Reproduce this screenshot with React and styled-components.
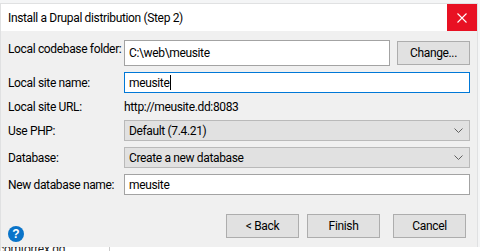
import styled, { createGlobalStyle } from "styled-components";

const GlobalStyle = createGlobalStyle`
  html, body {
    margin: 0;
    padding: 0;
    background: #f4f5f6;
  }
  body {
    font-family: Roboto, "Noto Sans", sans-serif;
    font-size: 12px;
    letter-spacing: -0.35px;
    color: #000;
  }
`;

const Desktop = styled.div`
  width: 480px;
  height: 251px;
  overflow: hidden;
  display: flex;
  flex-direction: column;
  padding-top: 4px;
  box-sizing: border-box;
`;

const Window = styled.div`
  flex-shrink: 0;
  margin-left: 1px;
  width: 476px;
  display: flex;
  flex-direction: column;
  background: #f0f0f0;
  box-shadow: 0 0 0 1px rgba(0, 0, 0, 0.08);
`;

const TitleBar = styled.div`
  height: 27px;
  background: #fff;
  display: flex;
  align-items: center;
  justify-content: space-between;
  padding-left: 7px;
`;

const Title = styled.span`
  font-size: 12px;
  padding-top: 1px;
`;

const CloseButton = styled.button`
  width: 30px;
  height: 27px;
  border: none;
  padding: 0;
  background: #e81123;
  display: flex;
  align-items: center;
  justify-content: center;
`;

const Body = styled.div`
  padding: 9px 7px 3px 7px;
  display: flex;
  flex-direction: column;
`;

const Form = styled.div`
  display: grid;
  grid-template-columns: 116px 1fr;
  row-gap: 6px;
`;

const Label = styled.label`
  align-self: ${(p) => (p.$top ? "start" : "center")};
  padding-top: ${(p) => (p.$top ? "2px" : "0")};
  white-space: nowrap;
`;

const FieldRow = styled.div`
  display: flex;
  align-items: center;
  gap: 7px;
`;

const TextInput = styled.div`
  flex: 1;
  height: ${(p) => p.$h || 21}px;
  box-sizing: border-box;
  background: #fff;
  border: 1px solid ${(p) => (p.$focused ? "#0078d7" : "#a3a3a3")};
  display: flex;
  align-items: center;
  padding-left: 4px;
`;

const Caret = styled.span`
  display: inline-block;
  width: 1px;
  height: 15px;
  background: #000;
  margin-left: 1px;
`;

const StaticText = styled.div`
  height: 15px;
  display: flex;
  align-items: center;
`;

const Select = styled.div`
  height: 21px;
  box-sizing: border-box;
  background: #e1e1e1;
  border: 1px solid #b9b9b9;
  display: flex;
  align-items: center;
  justify-content: space-between;
  padding: 0 6px 0 4px;
`;

const Button = styled.button`
  width: ${(p) => p.$w || 73}px;
  height: 24px;
  box-sizing: border-box;
  background: #e1e1e1;
  border: 1px solid #adadad;
  font-family: inherit;
  font-size: 12px;
  letter-spacing: inherit;
  color: #000;
  padding: 0;
`;

const Footer = styled.div`
  margin-top: 19px;
  height: 30px;
  display: flex;
  justify-content: space-between;
`;

const HelpIcon = styled.div`
  align-self: flex-end;
  margin: 0 0 2px 0;
  width: 16px;
  height: 16px;
  border-radius: 50%;
  background: #0a74c9;
  color: #fff;
  font-family: "Liberation Sans", sans-serif;
  font-weight: bold;
  font-size: 12px;
  line-height: 1;
  letter-spacing: 0;
  display: flex;
  align-items: center;
  justify-content: center;
`;

const Buttons = styled.div`
  display: flex;
  align-items: flex-start;
  gap: 8px;
  margin-right: 4px;

  & > button:last-child {
    margin-left: 5px;
  }
`;

const BehindStrip = styled.div`
  flex: 1;
  position: relative;
  background: #fff;
  overflow: hidden;
  border-left: 1px solid #ddd;
`;

const BehindText = styled.span`
  position: absolute;
  left: -3px;
  top: -4px;
  font-size: 12px;
  line-height: 12px;
  color: #222;
`;

const BehindLine = styled.span`
  position: absolute;
  left: 108px;
  top: 0;
  bottom: 0;
  width: 1px;
  background: #ccc;
`;

function Chevron() {
  return (
    <svg width="9" height="5" viewBox="0 0 9 5">
      <path d="M0.5 0.5 L4.5 4.5 L8.5 0.5" fill="none" stroke="#606060" strokeWidth="1" />
    </svg>
  );
}

function CloseIcon() {
  return (
    <svg width="10" height="10" viewBox="0 0 10 10">
      <path d="M0.5 0.5 L9.5 9.5 M9.5 0.5 L0.5 9.5" stroke="#fff" strokeWidth="1.1" />
    </svg>
  );
}

export default function App() {
  return (
    <>
      <GlobalStyle />
      <Desktop>
        <Window>
          <TitleBar>
            <Title>Install a Drupal distribution (Step 2)</Title>
            <CloseButton aria-label="Close">
              <CloseIcon />
            </CloseButton>
          </TitleBar>
          <Body>
            <Form>
              <Label $top>Local codebase folder:</Label>
              <FieldRow>
                <TextInput $h={26}>C:\web\meusite</TextInput>
                <Button>Change...</Button>
              </FieldRow>

              <Label>Local site name:</Label>
              <TextInput $focused>
                meusite
                <Caret />
              </TextInput>

              <Label>Local site URL:</Label>
              <StaticText>http://meusite.dd:8083</StaticText>

              <Label>Use PHP:</Label>
              <Select>
                <span>Default (7.4.21)</span>
                <Chevron />
              </Select>

              <Label>Database:</Label>
              <Select>
                <span>Create a new database</span>
                <Chevron />
              </Select>

              <Label>New database name:</Label>
              <TextInput>meusite</TextInput>
            </Form>
            <Footer>
              <HelpIcon>?</HelpIcon>
              <Buttons>
                <Button>&lt; Back</Button>
                <Button>Finish</Button>
                <Button>Cancel</Button>
              </Buttons>
            </Footer>
          </Body>
        </Window>
        <BehindStrip>
          <BehindText>comtorrex.dd</BehindText>
          <BehindLine />
        </BehindStrip>
      </Desktop>
    </>
  );
}
